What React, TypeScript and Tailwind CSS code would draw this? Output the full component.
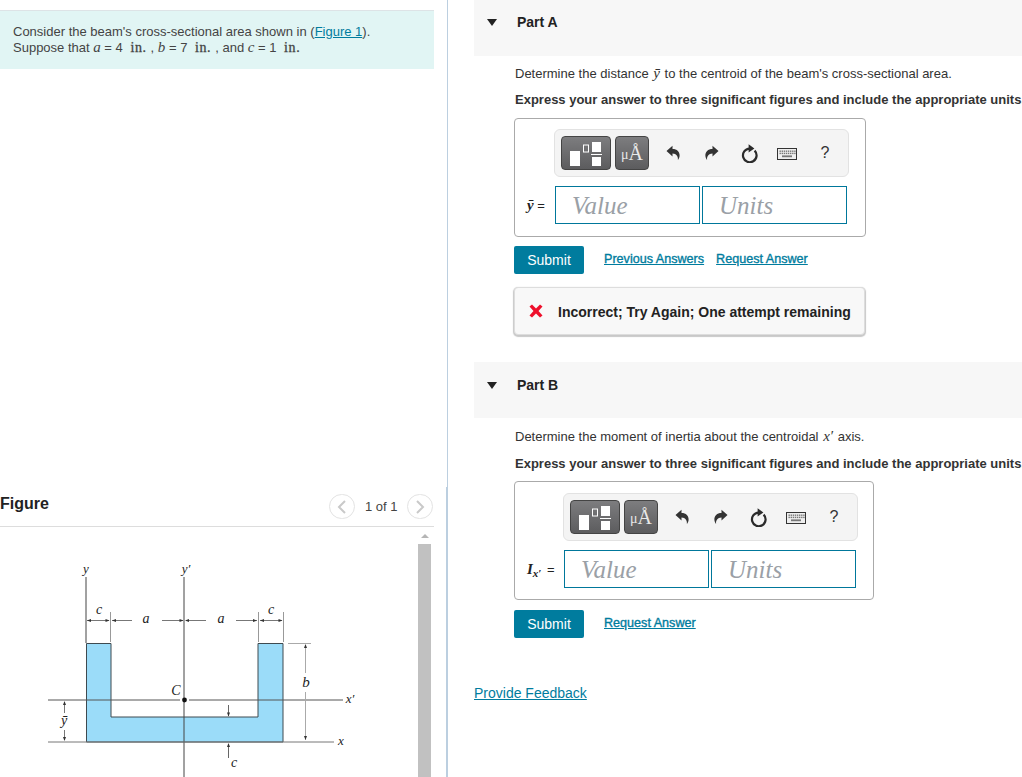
import React from "react";

const F = "font-['Liberation_Sans',Arial,sans-serif]";
const S = "font-['Liberation_Serif','Times_New_Roman',serif]";

function Undo({ flip = false }: { flip?: boolean }) {
  return (
    <svg width="16" height="16" viewBox="0 0 16 16" style={flip ? { transform: "scaleX(-1)" } : undefined}>
      <path d="M1.5 6 L7.5 .8 V3.9 C12 3.9 15 6.6 14.6 11 C14.4 12.7 13.7 14 12.9 15 C13.3 11.5 11.5 8.5 7.5 8.5 V11.4 Z" fill="#333" />
    </svg>
  );
}
function Reset() {
  return (
    <svg width="17" height="19" viewBox="0 0 17 19">
      <path d="M13.6 6.6 A6.8 6.8 0 1 1 8.5 4.6" fill="none" stroke="#2b2b2b" strokeWidth="2.2" />
      <path d="M7.6 0.3 L13.4 4.4 L7.6 8.6 Z" fill="#2b2b2b" />
    </svg>
  );
}
function Kbd() {
  const keys: React.ReactNode[] = [];
  for (let r = 0; r < 2; r++) for (let i = 0; i < 8; i++) keys.push(<rect key={`${r}-${i}`} x={2.5 + i * 2.1} y={2.5 + r * 2.2} width="1.4" height="1.4" fill="#777" />);
  return (
    <svg width="20" height="12" viewBox="0 0 20 12">
      <rect x=".5" y=".5" width="19" height="11" fill="#eee" stroke="#333" />
      {keys}
      <rect x="5" y="7.4" width="10" height="1.8" fill="#777" />
    </svg>
  );
}
function Templates() {
  return (
    <svg width="32" height="24" viewBox="0 0 32 24">
      <rect x="0" y="9" width="10" height="15" fill="#fff" />
      <rect x="13.5" y="3" width="5" height="7" fill="none" stroke="#fff" strokeWidth="1" />
      <rect x="22" y="0" width="9" height="10" fill="#fff" />
      <rect x="21" y="12" width="11" height="1" fill="#fff" />
      <rect x="22" y="15" width="9" height="9" fill="#fff" />
    </svg>
  );
}

function Toolbar({ cls }: { cls: string }) {
  const btn = "rounded-[4px] border border-[#444] bg-gradient-to-b from-[#7d7d7f] to-[#5c5c5e] h-[34px] flex items-center justify-center";
  return (
    <div className={`w-[295px] h-[48px] rounded-[6px] border border-[#e2e2e2] bg-[#f4f4f4] flex items-center pl-[6px] ${cls}`}>
      <div className={`${btn} w-[50px] pt-[1px]`}><Templates /></div>
      <div className={`${btn} w-[34px] ml-[4px] text-[#e8e8e8] leading-none ${S}`}>
        <span className="text-[14px] mt-[4px]">μ</span><span className="text-[20px]">Å</span>
      </div>
      <div className="ml-[14px] w-[20px] flex justify-center"><Undo /></div>
      <div className="ml-[19px] w-[20px] flex justify-center"><Undo flip /></div>
      <div className="ml-[17px] w-[20px] flex justify-center pt-[1px]"><Reset /></div>
      <div className="ml-[18px] w-[20px] flex justify-center pt-[1px]"><Kbd /></div>
      <div className="ml-[18px] w-[20px] text-center text-[16px] text-[#333]">?</div>
    </div>
  );
}

function InputBox({ big }: { big?: boolean }) {
  const input = `w-[145px] h-[38px] border border-[#00779b] bg-white pl-[16px] text-[25px] leading-[37px] italic text-[#9aa0a6] ${S}`;
  return (
    <div className={`${big ? "w-[360px] pt-[11px]" : "w-[352px] pt-[10px]"} h-[119px] border border-[#aaa] rounded-[4px] bg-white`}>
      <Toolbar cls={big ? "ml-[48px]" : "ml-[39px]"} />
      <div className="flex items-center mt-[9px]">
        {big ? (
          <div className="w-[49px] pl-[12px] text-[13px] text-[#222] whitespace-nowrap">
            <span className={`${S} italic font-bold text-[15px]`}>I</span>
            <sub className={`${S} italic font-bold text-[11px]`}>x′</sub> <span className="ml-[2px]">=</span>
          </div>
        ) : (
          <div className="w-[40px] pl-[12px] text-[13px] text-[#222] whitespace-nowrap">
            <span className={`${S} italic font-bold text-[15px]`}>ȳ</span> =
          </div>
        )}
        <div className={input}>Value</div>
        <div className={`${input} ml-[2px]`}>Units</div>
      </div>
    </div>
  );
}

function PartHeader({ name, cls }: { name: string; cls: string }) {
  return (
    <div className={`h-[56px] bg-[#f7f7f7] flex items-start ${cls}`}>
      <div className="ml-[13px] mt-[5px] w-0 h-0 border-l-[5.5px] border-r-[5.5px] border-t-[7px] border-l-transparent border-r-transparent border-t-[#222]" />
      <div className="ml-[20px] text-[14px] leading-[16px] font-bold text-[#222]">{name}</div>
    </div>
  );
}

function Express({ cls }: { cls: string }) {
  return <div className={`${cls} ml-[41px] text-[13px] leading-[17px] font-bold text-[#333] whitespace-nowrap`}>Express your answer to three significant figures and include the appropriate units.</div>;
}

function Lnk({ children, cls = "" }: { children: React.ReactNode; cls?: string }) {
  return <a className={`text-[12.6px] text-[#007c9e] underline [-webkit-text-stroke:0.35px_#007c9e] ${cls}`}>{children}</a>;
}

function Submit() {
  return <div className="w-[70px] h-[28px] rounded-[2px] bg-[#007c9e] text-white text-[14px] leading-[28px] text-center">Submit</div>;
}

function Figure() {
  const ln = "#555";
  const arrow = (x: number, y: number, dir: "l" | "r" | "u" | "d") => {
    const p = { l: `${x},${y} ${x + 4},${y - 1.5} ${x + 4},${y + 1.5}`, r: `${x},${y} ${x - 4},${y - 1.5} ${x - 4},${y + 1.5}`, u: `${x},${y} ${x - 1.5},${y + 4} ${x + 1.5},${y + 4}`, d: `${x},${y} ${x - 1.5},${y - 4} ${x + 1.5},${y - 4}` }[dir];
    return <polygon points={p} fill="#333" />;
  };
  const label = "Liberation Serif, serif";
  const T = ({ x, y, s, size = 12 }: { x: number; y: number; s: string; size?: number }) => (
    <text x={x} y={y} fontFamily={label} fontStyle="italic" fontSize={size} fill="#222" textAnchor="middle">{s}</text>
  );
  return (
    <svg width="417" height="250" viewBox="0 527 417 250" className="block">
      <path d="M86.5 643.5 H111 V717 H258 V643.5 H283 V742 H86.5 Z" fill="#9bdcf9" stroke="#3f4a50" strokeWidth="1" />
      <g stroke={ln} strokeWidth="1" fill="none">
        <path d="M86 577 V643" stroke="#444" />
        <path d="M184 577 V777" stroke="#444" />
        <path d="M48 700 H180 M189 700 H343" />
        <path d="M48 742 H334" stroke="#777" />
        <path d="M110.5 612 V642 M258.5 612 V642 M283.5 612 V642" stroke="#999" />
        <path d="M87 620.5 H109 M112 620.5 H132 M162 620.5 H183 M186 620.5 H206 M236 620.5 H257 M260 620.5 H282" stroke="#777" />
        <path d="M288 643.5 H311 M305.5 645 V673 M305.5 692 V740" stroke="#aaa" />
        <path d="M64.5 702 V713 M64.5 730 V740" stroke="#777" />
        <path d="M228.5 705 V716 M228.5 744 V758" stroke="#666" />
      </g>
      {arrow(87, 620.5, "l")}{arrow(109.5, 620.5, "r")}{arrow(112, 620.5, "l")}{arrow(183.5, 620.5, "r")}{arrow(185, 620.5, "l")}{arrow(257, 620.5, "r")}{arrow(260, 620.5, "l")}{arrow(282.5, 620.5, "r")}
      {arrow(305.5, 644, "u")}{arrow(305.5, 740, "d")}{arrow(64.5, 701, "u")}{arrow(64.5, 741, "d")}{arrow(228.5, 716.5, "d")}{arrow(228.5, 743, "u")}
      <circle cx="184.5" cy="700" r="2.4" fill="#111" />
      <T x={86} y={573} s="y" size={13} />
      <T x={186} y={573} s="y′" size={13} />
      <T x={99} y={614} s="c" size={14} />
      <T x={271} y={614} s="c" size={14} />
      <T x={146} y={623} s="a" size={14} />
      <T x={221} y={623} s="a" size={14} />
      <T x={176} y={695} s="C" size={14} />
      <T x={306} y={687} s="b" size={15} />
      <T x={350} y={703} s="x′" size={13} />
      <T x={341} y={745} s="x" size={13} />
      <T x={64} y={725} s="ȳ" size={14} />
      <T x={234} y={767} s="c" size={14} />
    </svg>
  );
}

export default function App() {
  const mi = `${S} italic text-[15px]`;
  const unit = `${S} text-[14px] tracking-[0.6px] mx-[4px] [-webkit-text-stroke:0.3px_#444]`;
  return (
    <div className={`${F} w-[1022px] h-[777px] overflow-hidden flex bg-white text-[#333]`}>
      <div className="w-[448px] h-full border-r border-r-[#bccfe0] pt-[10px] shrink-0">
        <div className="w-[434px] h-[59px] bg-[#e1f5f4] border-t border-t-[#dde3e6] pl-[13px] pt-[13px] text-[13px] leading-[16px] text-[#444]">
          <div>Consider the beam's cross-sectional area shown in (<span className="text-[#007c9e] underline">Figure 1</span>).</div>
          <div className="whitespace-nowrap -mt-[1px]">
            Suppose that <span className={mi}>a</span> = 4 <span className={unit}>in.</span>, <span className={mi}>b</span> = 7 <span className={unit}>in.</span>, and <span className={mi}>c</span> = 1 <span className={unit}>in.</span>
          </div>
        </div>
        <div className="w-[447px] h-[290px] mt-[418px] border-r border-r-[#bccfe0]">
          <div className="w-[434px] h-[40px] flex items-start border-b border-b-[#ddd] pt-[5px]">
            <div className="text-[16px] leading-[24px] font-bold text-[#222]">Figure</div>
            <div className="ml-auto mt-[2px] flex items-center">
              <div className="w-[26px] h-[25px] rounded-full border border-[#e3e3e3] flex items-center justify-center">
                <svg width="10" height="14" viewBox="0 0 10 14"><path d="M8 1 L2 7 L8 13" fill="none" stroke="#c9c9c9" strokeWidth="2" /></svg>
              </div>
              <div className="ml-[10px] w-[32px] text-[13px] text-[#444] whitespace-nowrap">1 of 1</div>
              <div className="ml-[10px] mr-[1px] w-[26px] h-[25px] rounded-full border border-[#e3e3e3] flex items-center justify-center">
                <svg width="10" height="14" viewBox="0 0 10 14"><path d="M2 1 L8 7 L2 13" fill="none" stroke="#c9c9c9" strokeWidth="2" /></svg>
              </div>
            </div>
          </div>
          <div className="flex w-[434px] h-[250px]">
            <Figure />
            <div className="w-[13px] ml-[1px] flex flex-col items-center">
              <div className="h-[17px] flex items-center justify-center">
                <div className="w-0 h-0 border-l-[4px] border-r-[4px] border-b-[4px] border-l-transparent border-r-transparent border-b-[#b5b5b5]" />
              </div>
              <div className="flex-1 w-full bg-[#c1c1c1]" />
            </div>
          </div>
        </div>
      </div>

      <div className="flex-1 pl-[26px] min-w-0">
        <PartHeader name="Part A" cls="pt-[14px]" />
        <div className="mt-[9px] ml-[41px] text-[13px] leading-[17px] text-[#333] whitespace-nowrap">
          Determine the distance <span className={`${S} italic text-[15px] mx-[1px]`}>ȳ</span> to the centroid of the beam's cross-sectional area.
        </div>
        <Express cls="mt-[9px]" />
        <div className="ml-[40px] mt-[10px]">
          <InputBox />
          <div className="flex items-start h-[28px] mt-[9px]">
            <Submit />
            <Lnk cls="ml-[20px] mt-[4px]">Previous Answers</Lnk>
            <Lnk cls="ml-[12px] mt-[4px]">Request Answer</Lnk>
          </div>
          <div className="mt-[13px] w-[351px] h-[48px] rounded-[4px] border border-[#ddd] bg-[#f8f8f8] shadow-[0_1px_1px_1px_#c8c8c8] flex items-center pl-[13px]">
            <svg width="16" height="14" viewBox="0 0 16 14"><path d="M1.5 2.5 L4 0.5 L8 4.5 L12 0.5 L14.5 2.5 L10.5 7 L14.5 11.5 L12 13.5 L8 9.5 L4 13.5 L1.5 11.5 L5.5 7 Z" fill="#ee0f2b" /></svg>
            <div className="ml-[14px] mt-[2px] text-[14px] font-bold text-[#222] whitespace-nowrap">Incorrect; Try Again; One attempt remaining</div>
          </div>
        </div>
        <div className="mt-[27px]"><PartHeader name="Part B" cls="pt-[15px]" /></div>
        <div className="mt-[10px] ml-[41px] text-[13px] leading-[17px] text-[#333] whitespace-nowrap">
          Determine the moment of inertia about the centroidal <span className={`${S} italic text-[15px] mx-[1px]`}>x′</span> axis.
        </div>
        <Express cls="mt-[10px]" />
        <div className="ml-[40px] mt-[9px]">
          <InputBox big />
          <div className="flex items-start h-[28px] mt-[10px]">
            <Submit />
            <Lnk cls="ml-[20px] mt-[4px]">Request Answer</Lnk>
          </div>
        </div>
        <div className="mt-[46px] text-[14px] leading-[18px] text-[#007c9e] underline">Provide Feedback</div>
      </div>
    </div>
  );
}
